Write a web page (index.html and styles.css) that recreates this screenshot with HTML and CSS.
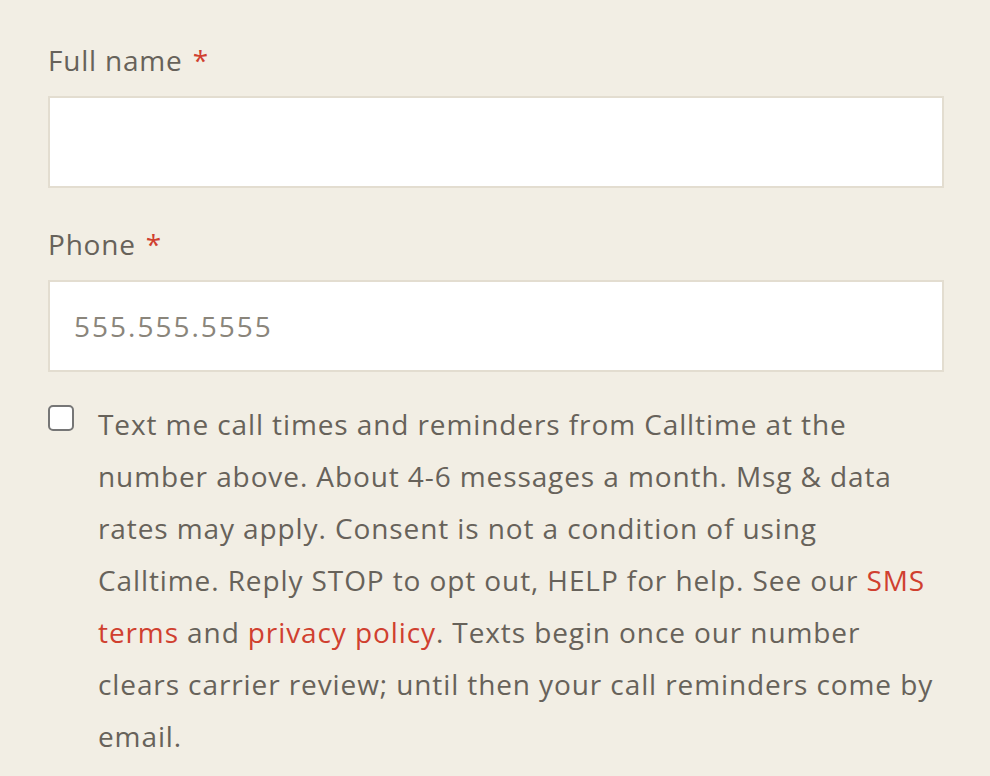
FILE: index.html
```html
<!DOCTYPE html>
<html lang="en">
<head>
<meta charset="utf-8">
<link rel="stylesheet" href="styles.css">
</head>
<body>
<form class="form">
  <div class="field">
    <label class="label" for="name">Full name <span class="req">*</span></label>
    <input class="input" id="name" type="text">
  </div>
  <div class="field">
    <label class="label" for="phone">Phone <span class="req">*</span></label>
    <input class="input" id="phone" type="tel" placeholder="555.555.5555">
  </div>
  <label class="consent">
    <span class="box"></span>
    <span class="consent-text">Text me call times and reminders from Calltime at the number above. About 4-6 messages a month. Msg &amp; data rates may apply. Consent is not a condition of using Calltime. Reply STOP to opt out, HELP for help. See our <a class="link" href="#">SMS terms</a> and <a class="link" href="#">privacy policy</a>. Texts begin once our number clears carrier review; until then your call reminders come by email.</span>
  </label>
</form>
</body>
</html>
```
FILE: styles.css
```css
html, body {
  margin: 0;
  padding: 0;
  background: #f2eee4;
}
body {
  font-family: "Open Sans", "Liberation Sans", sans-serif;
  color: #67625a;
}
.form {
  padding: 38px 46px 0 48px;
  display: flex;
  flex-direction: column;
}
.field {
  display: flex;
  flex-direction: column;
  margin-bottom: 34px;
}
.label {
  font-size: 28px;
  line-height: 44px;
  margin-bottom: 14px;
  letter-spacing: 0.8px;
}
.req {
  color: #d0402f;
  margin-left: 2px;
}
.input {
  box-sizing: border-box;
  height: 92px;
  border: 2px solid #e3ddd0;
  background: #fff;
  font-family: inherit;
  font-size: 28px;
  letter-spacing: 2px;
  padding: 0 24px;
  color: #67625a;
  outline: none;
}
.input::placeholder {
  color: #8a857b;
}
.consent {
  display: flex;
  gap: 24px;
  align-items: flex-start;
}
.box {
  flex: none;
  width: 22px;
  height: 22px;
  border: 2px solid #767676;
  border-radius: 5px;
  background: #fff;
  margin-top: -1px;
}
.consent-text {
  font-size: 28px;
  line-height: 52px;
  letter-spacing: 0.9px;
  margin-top: -8px;
}
.link {
  color: #d0402f;
  text-decoration: none;
}
```
